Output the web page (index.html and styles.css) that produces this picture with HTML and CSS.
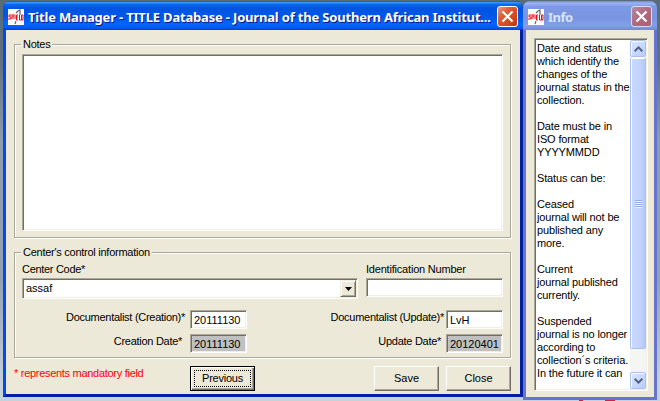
FILE: index.html
```html
<!DOCTYPE html>
<html lang="en">
<head>
<meta charset="utf-8">
<title>Title Manager</title>
<link rel="stylesheet" href="styles.css">
</head>
<body>
<div class="desktop">
  <main class="window main">
    <header class="titlebar">
      <svg class="logo" width="16" height="16" viewBox="0 0 16 16"><path fill="#fff" d="M0 0h16v16H0z"/><path d="M8 4l2-2 2-1v5M8 12l-1 3" fill="none" stroke="#666" stroke-width="1.200"/><path d="M3 6H1v2h2v2H0M4 5v5M4 7h2M6 5v5M8 6v4M10 6H8.500v5H10M8 8h2M11.500 6v5H13M13.500 6v5H15V6z" fill="none" stroke="#e80b18" stroke-width="1"/></svg>
      <h1 class="caption">Title Manager - TITLE Database - Journal of the Southern African Institut...</h1>
      <span class="close"><svg width="21" height="21" viewBox="0 0 21 21"><path d="M5.500 5.500l10 10M15.500 5.500l-10 10" stroke="#fff" stroke-width="2.200"/></svg></span>
    </header>
    <div class="client">
      <section class="group notes">
        <div class="legend"><span>Notes</span></div>
        <div class="sunken notes-box"></div>
      </section>
      <section class="group control">
        <div class="legend"><span>Center's control information</span></div>
        <div class="codes">
          <div>
            <div class="label">Center Code*</div>
            <div class="sunken select"><span>assaf</span><span class="arrow"><svg width="7" height="4" viewBox="0 0 7 4"><path d="M0 0h7L3.500 4z"/></svg></span></div>
          </div>
          <div>
            <div class="label wide">Identification Number</div>
            <div class="sunken field"></div>
          </div>
        </div>
        <div class="details">
          <span class="name">Documentalist (Creation)*</span><span class="sunken field">20111130</span>
          <span class="name second">Documentalist (Update)*</span><span class="sunken field">LvH</span>
          <span class="name date">Creation Date*</span><span class="sunken field disabled">20111130</span>
          <span class="name second date">Update Date*</span><span class="sunken field disabled">20120401</span>
        </div>
      </section>
      <footer class="actions">
        <span class="hint">* represents mandatory field</span>
        <span class="button default"><span class="focus">Previous</span></span>
        <span class="button save">Save</span>
        <span class="button">Close</span>
      </footer>
    </div>
  </main>
  <aside class="window info">
    <header class="titlebar">
      <svg class="logo" width="16" height="16" viewBox="0 0 16 16"><path fill="#fff" d="M0 0h16v16H0z"/><path d="M8 4l2-2 2-1v5M8 12l-1 3" fill="none" stroke="#666" stroke-width="1.200"/><path d="M3 6H1v2h2v2H0M4 5v5M4 7h2M6 5v5M8 6v4M10 6H8.500v5H10M8 8h2M11.500 6v5H13M13.500 6v5H15V6z" fill="none" stroke="#e80b18" stroke-width="1"/></svg>
      <h2 class="caption">Info</h2>
      <span class="close"><svg width="21" height="21" viewBox="0 0 21 21"><path d="M5.500 5.500l10 10M15.500 5.500l-10 10" stroke="#fff" stroke-width="2.200"/></svg></span>
    </header>
    <div class="client">
      <div class="sunken help">
        <div class="help-text">Date and status
which identify the
changes of the
journal status in the
collection.

Date must be in
ISO format
YYYYMMDD

Status can be:

Ceased
journal will not be
published any
more.

Current
journal published
currently.

Suspended
journal is no longer
according to
collection´s criteria.
In the future it can</div>
        <div class="scroll">
          <span class="step"><svg width="9" height="6" viewBox="0 0 9 6"><path d="M.7 5.200L4.500 1.400l3.800 3.800" fill="none" stroke="#4d6185" stroke-width="2"/></svg></span>
          <span class="thumb"><i></i><i></i><i></i><i></i></span>
          <span class="step down"><svg width="9" height="6" viewBox="0 0 9 6"><path d="M.7.800l3.800 3.800L8.300.800" fill="none" stroke="#4d6185" stroke-width="2"/></svg></span>
        </div>
      </div>
    </div>
  </aside>
  <svg class="wallpaper-mark" width="50" height="2" viewBox="0 0 50 2"><path d="M0 1h4M26 1h10" stroke="#d8203c" stroke-width="2"/></svg>
</div>
</body>
</html>
```
FILE: styles.css
```css
* { box-sizing: border-box; }
body { margin: 0; font: 11px/13px "Liberation Sans", Arial, sans-serif; color: #000; }
.desktop {
  position: relative; width: 660px; height: 401px; overflow: hidden;
  background: linear-gradient(#586b78 0, #5d717f 15%, #8c9dac 35%, #91a2b2 70%, #c5d2da 96%);
}
.window { position: absolute; top: 1px; display: flex; flex-direction: column; border-radius: 7px 7px 0 0; }
.main { left: 3px; width: 520px; height: 396px; background: #0831d9; border: solid; border-width: 0 3px 3px; border-color: #0848e8 #001ea0 #001ea0 #0848e8; }
.info { left: 523px; width: 134px; height: 399px; background: #7b90dd; border: 3px solid #6674d0; border-top: 0; }
.titlebar {
  display: flex; align-items: center; height: 29px; margin: 0 -3px; padding: 2px 5px 0 5px; flex: none;
  border-radius: 7px 7px 0 0;
  background: linear-gradient(#0a46b8 0, #3d95ff 5%, #0a6af0 12%, #0054e3 25%, #0057e8 55%, #0066ff 80%, #005bf5 92%, #003dd7 100%);
}
.info .titlebar { background: linear-gradient(#7587d8 0, #9db4f0 8%, #7d98e4 20%, #7a95e0 60%, #829fe8 85%, #7389d8 100%); }
.logo { flex: none; }
.caption { margin: 0 0 0 4px; flex: 1; white-space: nowrap; font: bold 13px/18px "Noto Sans", "Open Sans", sans-serif; color: #fff; text-shadow: 1px 1px #0a1883; letter-spacing: -.18px; }
.info .caption { color: #d8e4f8; text-shadow: none; letter-spacing: -.5px; }
.close { width: 21px; height: 21px; flex: none; border: 1px solid #fff; border-radius: 3px; background: linear-gradient(135deg, #ee9a80, #e35a33 35%, #d34015 80%, #b83008); }
.close svg { display: block; margin: -1px; }
.info .close { border-color: #d5dbf5; background: linear-gradient(135deg, #b68aa6, #b0697d 50%, #a95e73); }
.client { flex: 1; background: #ece9d8; min-height: 0; }
.main .client { padding: 14px 9px 0 8px; }
.info .client { padding: 8px 6px 6px 8px; }
.group { border: 1px solid #aca899; box-shadow: 1px 1px #fff, inset 1px 1px #fff; padding: 0 7px; }
.legend { height: 9px; letter-spacing: -.26px; }
.legend span { display: inline-block; position: relative; top: -7px; background: #ece9d8; padding: 0 2px; margin-left: -1px; }
.sunken { border: 1px solid; border-color: #aca899 #fff #fff #aca899; box-shadow: inset 1px 1px #716f64, inset -1px -1px #f1efe2; background: #fff; }
.notes { height: 194px; }
.notes-box { height: 177px; width: 481px; }
.control { height: 106px; margin-top: 14px; }
.codes { display: grid; grid-template-columns: 336px 137px; column-gap: 8px; }
.label { height: 16px; letter-spacing: -.3px; padding-top: 1px; }
.label.wide { letter-spacing: -.2px; }
.select { height: 21px; display: flex; justify-content: space-between; align-items: center; padding: 2px 1px 2px 3px; }
.arrow { width: 16px; height: 17px; display: grid; place-items: center; background: #ece9d8; border: 1px solid; border-color: #f1efe2 #716f64 #716f64 #f1efe2; box-shadow: inset 1px 1px #fff, inset -1px -1px #aca899; }
.field { display: block; height: 19px; padding: 2px 3px 0; line-height: 14px; white-space: nowrap; }
.details { display: grid; grid-template-columns: 168px 57px 199px 57px; row-gap: 5px; margin-top: 11px; }
.name { text-align: right; line-height: 15px; letter-spacing: -.28px; padding-right: 5px; }
.date { padding-right: 8px; }
.second { padding-right: 2px; }
.second.date { padding-right: 5px; }
.disabled { background: #c0c0c0; }
.actions { display: flex; margin-top: 8px; height: 25px; }
.hint { width: 176px; color: #f00; line-height: 15px; letter-spacing: -.29px; }
.button { width: 65px; height: 25px; display: grid; place-items: center; border: 1px solid; border-color: #fff #716f64 #716f64 #fff; box-shadow: inset -1px -1px #aca899; }
.default { border-color: #000; box-shadow: inset 1px 1px #fff, inset -1px -1px #716f64, inset -2px -2px #aca899; }
.focus { width: 57px; height: 17px; border: 1px dotted #000; text-align: center; line-height: 15px; letter-spacing: -.25px; }
.save { margin: 0 7px 0 119px; }
.help { height: 353px; display: flex; justify-content: space-between; padding: 1px; }
.help-text { white-space: pre; padding: 2px 0 0 1px; width: 94px; letter-spacing: -.14px; }
.scroll { width: 16px; display: flex; flex-direction: column; background: #f5f5f1; flex: none; }
.step { height: 17px; display: grid; place-items: center; border: 1px solid #a9c0f5; border-radius: 2px; background: linear-gradient(135deg, #dce7ff, #b7ccf9); box-shadow: inset 1px 1px #fff; }
.down { margin-top: auto; }
.thumb { height: 292px; display: flex; flex-direction: column; gap: 1px; justify-content: center; align-items: center; border: 1px solid #a9c0f5; border-top-color: #fff; border-radius: 2px; background: linear-gradient(90deg, #cad9fd, #c2d3fb 65%, #b3c8f7); box-shadow: inset 1px 1px #fff; }
.thumb i { width: 7px; height: 1px; background: #8eadf0; box-shadow: 0 1px #eef4fe; }
.wallpaper-mark { position: absolute; left: 579px; top: 400px; }
```
